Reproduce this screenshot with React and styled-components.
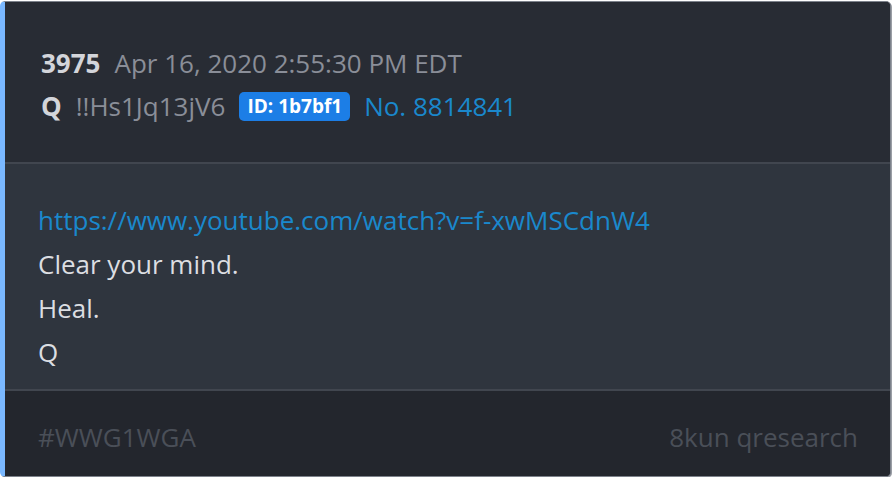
import React from "react";
import styled, { createGlobalStyle } from "styled-components";

const Global = createGlobalStyle`
  html, body { margin: 0; padding: 0; background: #ffffff; }
  body { font-family: "Open Sans", "Noto Sans", sans-serif; }
`;

const Card = styled.div`
  box-sizing: border-box;
  width: 891px;
  height: 476px;
  margin: 1px 0 0 0;
  border: 1px solid #7d828b;
  border-left: 5px solid #7ab8ff;
  border-radius: 5px;
  box-shadow: 1px 1px 0 #9a9ea5;
  overflow: hidden;
  display: flex;
  flex-direction: column;
  background: #2f353e;
`;

const Header = styled.div`
  background: #282c34;
  padding: 45px 0 0 36px;
  height: 162px;
  flex-shrink: 0;
  box-sizing: border-box;
  border-bottom: 2px solid #41464f;
  display: flex;
  flex-direction: column;
  gap: 10px;
`;

const Line = styled.div`
  display: flex;
  align-items: center;
  gap: 14px;
  font-size: 26px;
  line-height: 33px;
  white-space: nowrap;
`;

const Strong = styled.span`
  font-weight: 700;
  color: #d3d5da;
`;

const Muted = styled.span`
  color: #8a8e98;
`;

const Badge = styled.span`
  background: #1c7ee6;
  color: #ffffff;
  font-weight: 700;
  font-size: 19px;
  line-height: 29px;
  padding: 0 8px;
  border-radius: 5px;
`;

const Link = styled.a`
  color: #1a88cc;
  text-decoration: none;
`;

const Body = styled.div`
  height: 227px;
  flex-shrink: 0;
  box-sizing: border-box;
  background: #2f353e;
  padding: 40px 0 0 33px;
  border-bottom: 2px solid #41464f;
  display: flex;
  flex-direction: column;
  gap: 11px;
`;

const Para = styled.div`
  font-size: 26px;
  line-height: 33px;
  color: #dcdee2;
  white-space: nowrap;
`;

const Footer = styled.div`
  flex: 1;
  box-sizing: border-box;
  background: #23262d;
  display: flex;
  align-items: center;
  justify-content: space-between;
  padding: 7px 32px 0 33px;
  font-size: 26px;
  color: #4a4f58;
`;

export default function App() {
  return (
    <>
      <Global />
      <Card>
        <Header>
          <Line>
            <Strong>3975</Strong>
            <Muted>Apr 16, 2020 2:55:30 PM EDT</Muted>
          </Line>
          <Line>
            <Strong>Q</Strong>
            <Muted>!!Hs1Jq13jV6</Muted>
            <Badge>ID: 1b7bf1</Badge>
            <Link href="#">No. 8814841</Link>
          </Line>
        </Header>
        <Body>
          <Para>
            <Link href="#">https://www.youtube.com/watch?v=f-xwMSCdnW4</Link>
          </Para>
          <Para>Clear your mind.</Para>
          <Para>Heal.</Para>
          <Para>Q</Para>
        </Body>
        <Footer>
          <span>#WWG1WGA</span>
          <span>8kun qresearch</span>
        </Footer>
      </Card>
    </>
  );
}
